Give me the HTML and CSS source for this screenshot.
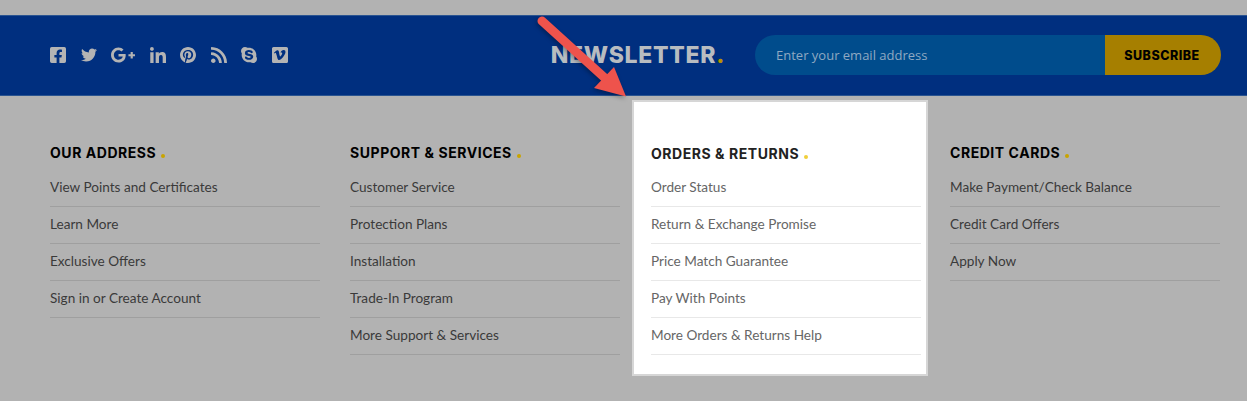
FILE: index.html
```html
<!DOCTYPE html>
<html>

<head>
    <title>Footer</title>
    <meta name="viewport" content="width=device-width, initial-scale=1.0">
    <link rel="stylesheet" href="styles.css">
</head>

<body>
    <div class="band">
        <div class="social">
            <svg class="icon" viewBox="0 32 448 448"><path d="M400 32H48A48 48 0 0 0 0 80v352a48 48 0 0 0 48 48h137.25V327.69h-63V256h63v-54.64c0-62.15 37-96.48 93.67-96.48 27.14 0 55.52 4.84 55.52 4.84v61h-31.27c-30.81 0-40.42 19.12-40.42 38.73V256h68.78l-11 71.69h-57.78V480H400a48 48 0 0 0 48-48V80a48 48 0 0 0-48-48z"/></svg>
            <svg class="icon" viewBox="0 0 512 512"><path d="M459.37 151.716c.325 4.548.325 9.097.325 13.645 0 138.72-105.583 298.558-298.558 298.558-59.452 0-114.68-17.219-161.137-47.106 8.447.974 16.568 1.299 25.34 1.299 49.055 0 94.213-16.568 130.274-44.832-46.132-.975-84.792-31.188-98.112-72.772 6.498.974 12.995 1.624 19.818 1.624 9.421 0 18.843-1.3 27.614-3.573-48.081-9.747-84.143-51.98-84.143-102.985v-1.299c13.969 7.797 30.214 12.67 47.431 13.319-28.264-18.843-46.781-51.005-46.781-87.391 0-19.492 5.197-37.36 14.294-52.954 51.655 63.675 129.3 105.258 216.365 109.807-1.624-7.797-2.599-15.918-2.599-24.04 0-57.828 46.782-104.934 104.934-104.934 30.213 0 57.502 12.67 76.67 33.137 23.715-4.548 46.456-13.32 66.599-25.34-7.798 24.366-24.366 44.833-46.132 57.827 21.117-2.273 41.584-8.122 60.426-16.243-14.292 20.791-32.161 39.308-52.628 54.253z"/></svg>
            <svg class="icon icon-wide" viewBox="12 64 616 384"><path d="M386.061 228.496c1.834 9.692 3.143 19.384 3.143 31.956C389.204 370.205 315.599 448 204.8 448c-106.084 0-192-85.915-192-192s85.916-192 192-192c51.864 0 95.083 18.859 128.611 50.292l-52.126 50.03c-14.145-13.621-39.028-29.599-76.485-29.599-65.484 0-118.92 54.221-118.92 121.277 0 67.056 53.436 121.277 118.92 121.277 75.961 0 104.513-54.745 108.965-82.773H204.8v-66.009h181.261zm185.406 6.437V179.2h-56.001v55.733h-55.733v56.001h55.733v55.733h56.001v-55.733H627.2v-56.001h-55.734z"/></svg>
            <svg class="icon" viewBox="0 0 448 448"><path d="M100.28 448H7.4V148.9h92.88zM53.79 108.1C24.09 108.1 0 83.5 0 53.8a53.79 53.79 0 0 1 107.58 0c0 29.7-24.1 54.3-53.79 54.3zM447.9 448h-92.68V302.4c0-34.7-.7-79.2-48.29-79.2-48.29 0-55.69 37.7-55.69 76.7V448h-92.78V148.9h89.08v40.8h1.3c12.4-23.5 42.69-48.3 87.88-48.3 94 0 111.28 61.9 111.28 142.3V448z"/></svg>
            <svg class="icon" viewBox="0 8 496 496"><path d="M496 256c0 137-111 248-248 248-25.6 0-50.2-3.9-73.4-11.1 10.1-16.5 25.2-43.5 30.8-65 3-11.6 15.4-59 15.4-59 8.1 15.4 31.7 28.5 56.8 28.5 74.8 0 128.7-68.8 128.7-154.3 0-81.9-66.9-143.2-152.9-143.2-107 0-163.9 71.8-163.9 150.1 0 36.4 19.4 81.7 50.3 96.1 4.7 2.2 7.2 1.2 8.3-3.3.8-3.4 5-20.3 6.9-28.1.6-2.5.3-4.7-1.7-7.1-10.1-12.5-18.3-35.3-18.3-56.6 0-54.7 41.4-107.6 112-107.6 60.9 0 103.6 41.5 103.6 100.9 0 67.1-33.9 113.6-78 113.6-24.3 0-42.6-20.1-36.7-44.8 7-29.5 20.5-61.3 20.5-82.6 0-19-10.2-34.9-31.4-34.9-24.9 0-44.9 25.7-44.9 60.2 0 22 7.4 36.8 7.4 36.8s-24.5 103.8-29 123.2c-5 21.4-3 51.6-.9 71.2C65.4 450.9 0 361.1 0 256 0 119 111 8 248 8s248 111 248 248z"/></svg>
            <svg class="icon" viewBox="0 32 448 448"><path d="M128.081 415.959c0 35.369-28.672 64.041-64.041 64.041S0 451.328 0 415.959s28.672-64.041 64.041-64.041 64.04 28.673 64.04 64.041zm175.66 47.25c-8.354-154.6-132.185-278.587-286.95-286.95C7.656 175.765 0 183.105 0 192.253v48.069c0 8.415 6.49 15.472 14.887 16.018 111.832 7.284 201.473 96.702 208.772 208.772.547 8.397 7.604 14.887 16.018 14.887h48.069c9.149.001 16.489-7.655 15.995-16.79zm144.249.288C439.596 229.677 251.465 40.445 16.503 32.01 7.473 31.686 0 38.981 0 48.016v48.068c0 8.625 6.835 15.645 15.453 15.999 191.179 7.839 344.627 161.316 352.465 352.465.353 8.618 7.373 15.453 15.999 15.453h48.068c9.034-.001 16.329-7.474 16.005-16.504z"/></svg>
            <svg class="icon" viewBox="0 32 448 448"><path d="M424.7 299.8c2.9-14 4.7-28.9 4.7-43.8 0-113.5-91.9-205.3-205.3-205.3-14.9 0-29.7 1.7-43.8 4.7C161.3 40.7 137.7 32 112 32 50.2 32 0 82.2 0 144c0 25.7 8.7 49.3 23.3 68.2-2.9 14-4.7 28.9-4.7 43.8 0 113.5 91.9 205.3 205.3 205.3 14.9 0 29.7-1.7 43.8-4.7 19 14.6 42.6 23.3 68.2 23.3 61.8 0 112-50.2 112-112 .1-25.6-8.6-49.2-23.2-68.1zm-194.6 91.5c-65.6 0-120.5-29.2-120.5-65 0-16 9-30.6 29.5-30.6 31.2 0 34.1 44.9 88.1 44.9 25.7 0 42.3-11.4 42.3-26.3 0-18.7-16-21.6-42-28-62.5-15.4-117.8-22-117.8-87.2 0-59.2 58.6-81.1 109.1-81.1 55.1 0 110.8 21.9 110.8 55.4 0 16.9-11.4 31.8-30.3 31.8-28.3 0-29.2-33.5-75-33.5-25.7 0-42 7-42 22.5 0 19.8 20.8 21.8 69.1 33 41.4 9.3 90.7 26.8 90.7 77.6 0 59.1-57.1 86.5-112 86.5z"/></svg>
            <svg class="icon" viewBox="0 32 448 448"><path d="M403.2 32H44.8C20.1 32 0 52.1 0 76.8v358.4C0 459.9 20.1 480 44.8 480h358.4c24.7 0 44.8-20.1 44.8-44.8V76.8c0-24.7-20.1-44.8-44.8-44.8zM377 180.8c-1.4 31.5-23.4 74.7-66 129.4-44 57.2-81.3 85.8-111.7 85.8-18.9 0-34.8-17.4-47.9-52.3-25.5-93.3-36.4-148-57.4-148-2.4 0-10.9 5.1-25.4 15.2l-15.2-19.6c37.3-32.8 72.9-69.2 95.2-71.2 25.2-2.4 40.7 14.8 46.5 51.7 20.7 131.2 29.9 151 67.6 91.6 13.5-21.4 20.8-37.7 21.8-48.9 3.5-33.2-25.9-30.9-45.8-22.4 15.9-52.1 46.3-77.4 91.2-76 33.3.9 49 22.5 47.1 64.7z"/></svg>
        </div>
        <div class="newsletter">
            <h2>NEWSLETTER<span class="dot">.</span></h2>
            <form class="signup">
                <input type="text" placeholder="Enter your email address">
                <button type="button">SUBSCRIBE</button>
            </form>
        </div>
    </div>

    <div class="columns">
        <div class="col">
            <h3>OUR ADDRESS<span class="bullet"></span></h3>
            <ul>
                <li>View Points and Certificates</li>
                <li>Learn More</li>
                <li>Exclusive Offers</li>
                <li>Sign in or Create Account</li>
            </ul>
        </div>
        <div class="col">
            <h3>SUPPORT &amp; SERVICES<span class="bullet"></span></h3>
            <ul>
                <li>Customer Service</li>
                <li>Protection Plans</li>
                <li>Installation</li>
                <li>Trade-In Program</li>
                <li>More Support &amp; Services</li>
            </ul>
        </div>
        <div class="col col-focus">
            <h3>ORDERS &amp; RETURNS<span class="bullet"></span></h3>
            <ul>
                <li>Order Status</li>
                <li>Return &amp; Exchange Promise</li>
                <li>Price Match Guarantee</li>
                <li>Pay With Points</li>
                <li>More Orders &amp; Returns Help</li>
            </ul>
        </div>
        <div class="col">
            <h3>CREDIT CARDS<span class="bullet"></span></h3>
            <ul>
                <li>Make Payment/Check Balance</li>
                <li>Credit Card Offers</li>
                <li>Apply Now</li>
            </ul>
        </div>
    </div>

    <!-- callout arrow over the band -->
    <svg class="arrow" width="110" height="100" viewBox="530 10 110 100">
        <line x1="542" y1="21" x2="606" y2="79" stroke="#ee534c" stroke-width="9" stroke-linecap="round"/>
        <polygon points="626,96.5 614,67 594,88" fill="#ee534c"/>
    </svg>
</body>

</html>
```

FILE: styles.css
```css
body {
    margin: 0;
    height: 401px;
    overflow: hidden;
    position: relative;
    background-color: #b2b2b2;
    font-family: "Lato", "Open Sans", sans-serif;
}

.band {
    display: flex;
    align-items: center;
    justify-content: space-between;
    height: 78px;
    margin-top: 15px;
    padding: 0 26px 1px 50px;
    background-color: #002f7f;
    border-top: 1px solid #2a5490;
    border-bottom: 1px solid #2a5490;
}

.social {
    display: flex;
    align-items: center;
    gap: 14.5px;
    margin-bottom: 1px;
}

.icon {
    display: block;
    width: 16px;
    height: 16px;
    fill: #b4b4b4;
}

.icon-wide {
    width: 24px;
}

.newsletter {
    display: flex;
    align-items: center;
    gap: 30px;
}

.newsletter h2 {
    margin: 0;
    font-family: "Inter", sans-serif;
    font-size: 23px;
    font-weight: 800;
    letter-spacing: 0.7px;
    color: #b8bcc0;
}

.newsletter .dot {
    color: #b89200;
}

.signup {
    display: flex;
    width: 466px;
    height: 40px;
}

.signup input {
    flex: 1;
    min-width: 0;
    padding: 0 0 0 21px;
    border: none;
    border-radius: 20px 0 0 20px;
    background-color: #004c8c;
    font-family: "Open Sans", sans-serif;
    font-size: 13px;
}

.signup input::placeholder {
    color: #8fa9c2;
    opacity: 1;
}

.signup button {
    width: 116px;
    padding: 0 2px 0 0;
    border: none;
    border-radius: 0 20px 20px 0;
    background-color: #a67f00;
    color: #000;
    font-family: "Inter", sans-serif;
    font-size: 12.5px;
    font-weight: 800;
    letter-spacing: 0.5px;
}

.columns {
    display: grid;
    grid-template-columns: repeat(4, 270px);
    column-gap: 30px;
    align-items: start;
    padding: 47px 0 0 50px;
}

.col h3 {
    margin: 0;
    height: 27px;
    font-family: "Inter", sans-serif;
    font-size: 14px;
    line-height: 20px;
    font-weight: 700;
    letter-spacing: 0.55px;
    color: #000;
}

.bullet {
    display: inline-block;
    width: 4px;
    height: 4px;
    margin-left: 5px;
    border-radius: 50%;
    background-color: #c9a400;
}

.col ul {
    margin: 0;
    padding: 0;
    list-style: none;
}

.col li {
    height: 36px;
    line-height: 35px;
    border-bottom: 1px solid #9f9f9f;
    font-size: 13.6px;
    color: #3a3a3a;
}

.col-focus {
    margin: -43px -8px 0 -18px;
    padding: 42px 5px 19px 17px;
    background-color: #fff;
    border: 2px solid #d6d6d6;
}

.col-focus h3 {
    height: 26px;
    color: #222;
}

.col-focus .bullet {
    background-color: #f0cf3a;
}

.col-focus li {
    border-bottom-color: #e8e8e8;
    color: #666;
}

.arrow {
    position: absolute;
    left: 530px;
    top: 10px;
    filter: drop-shadow(-1px 2px 2px rgba(0, 0, 0, 0.3));
}
```
